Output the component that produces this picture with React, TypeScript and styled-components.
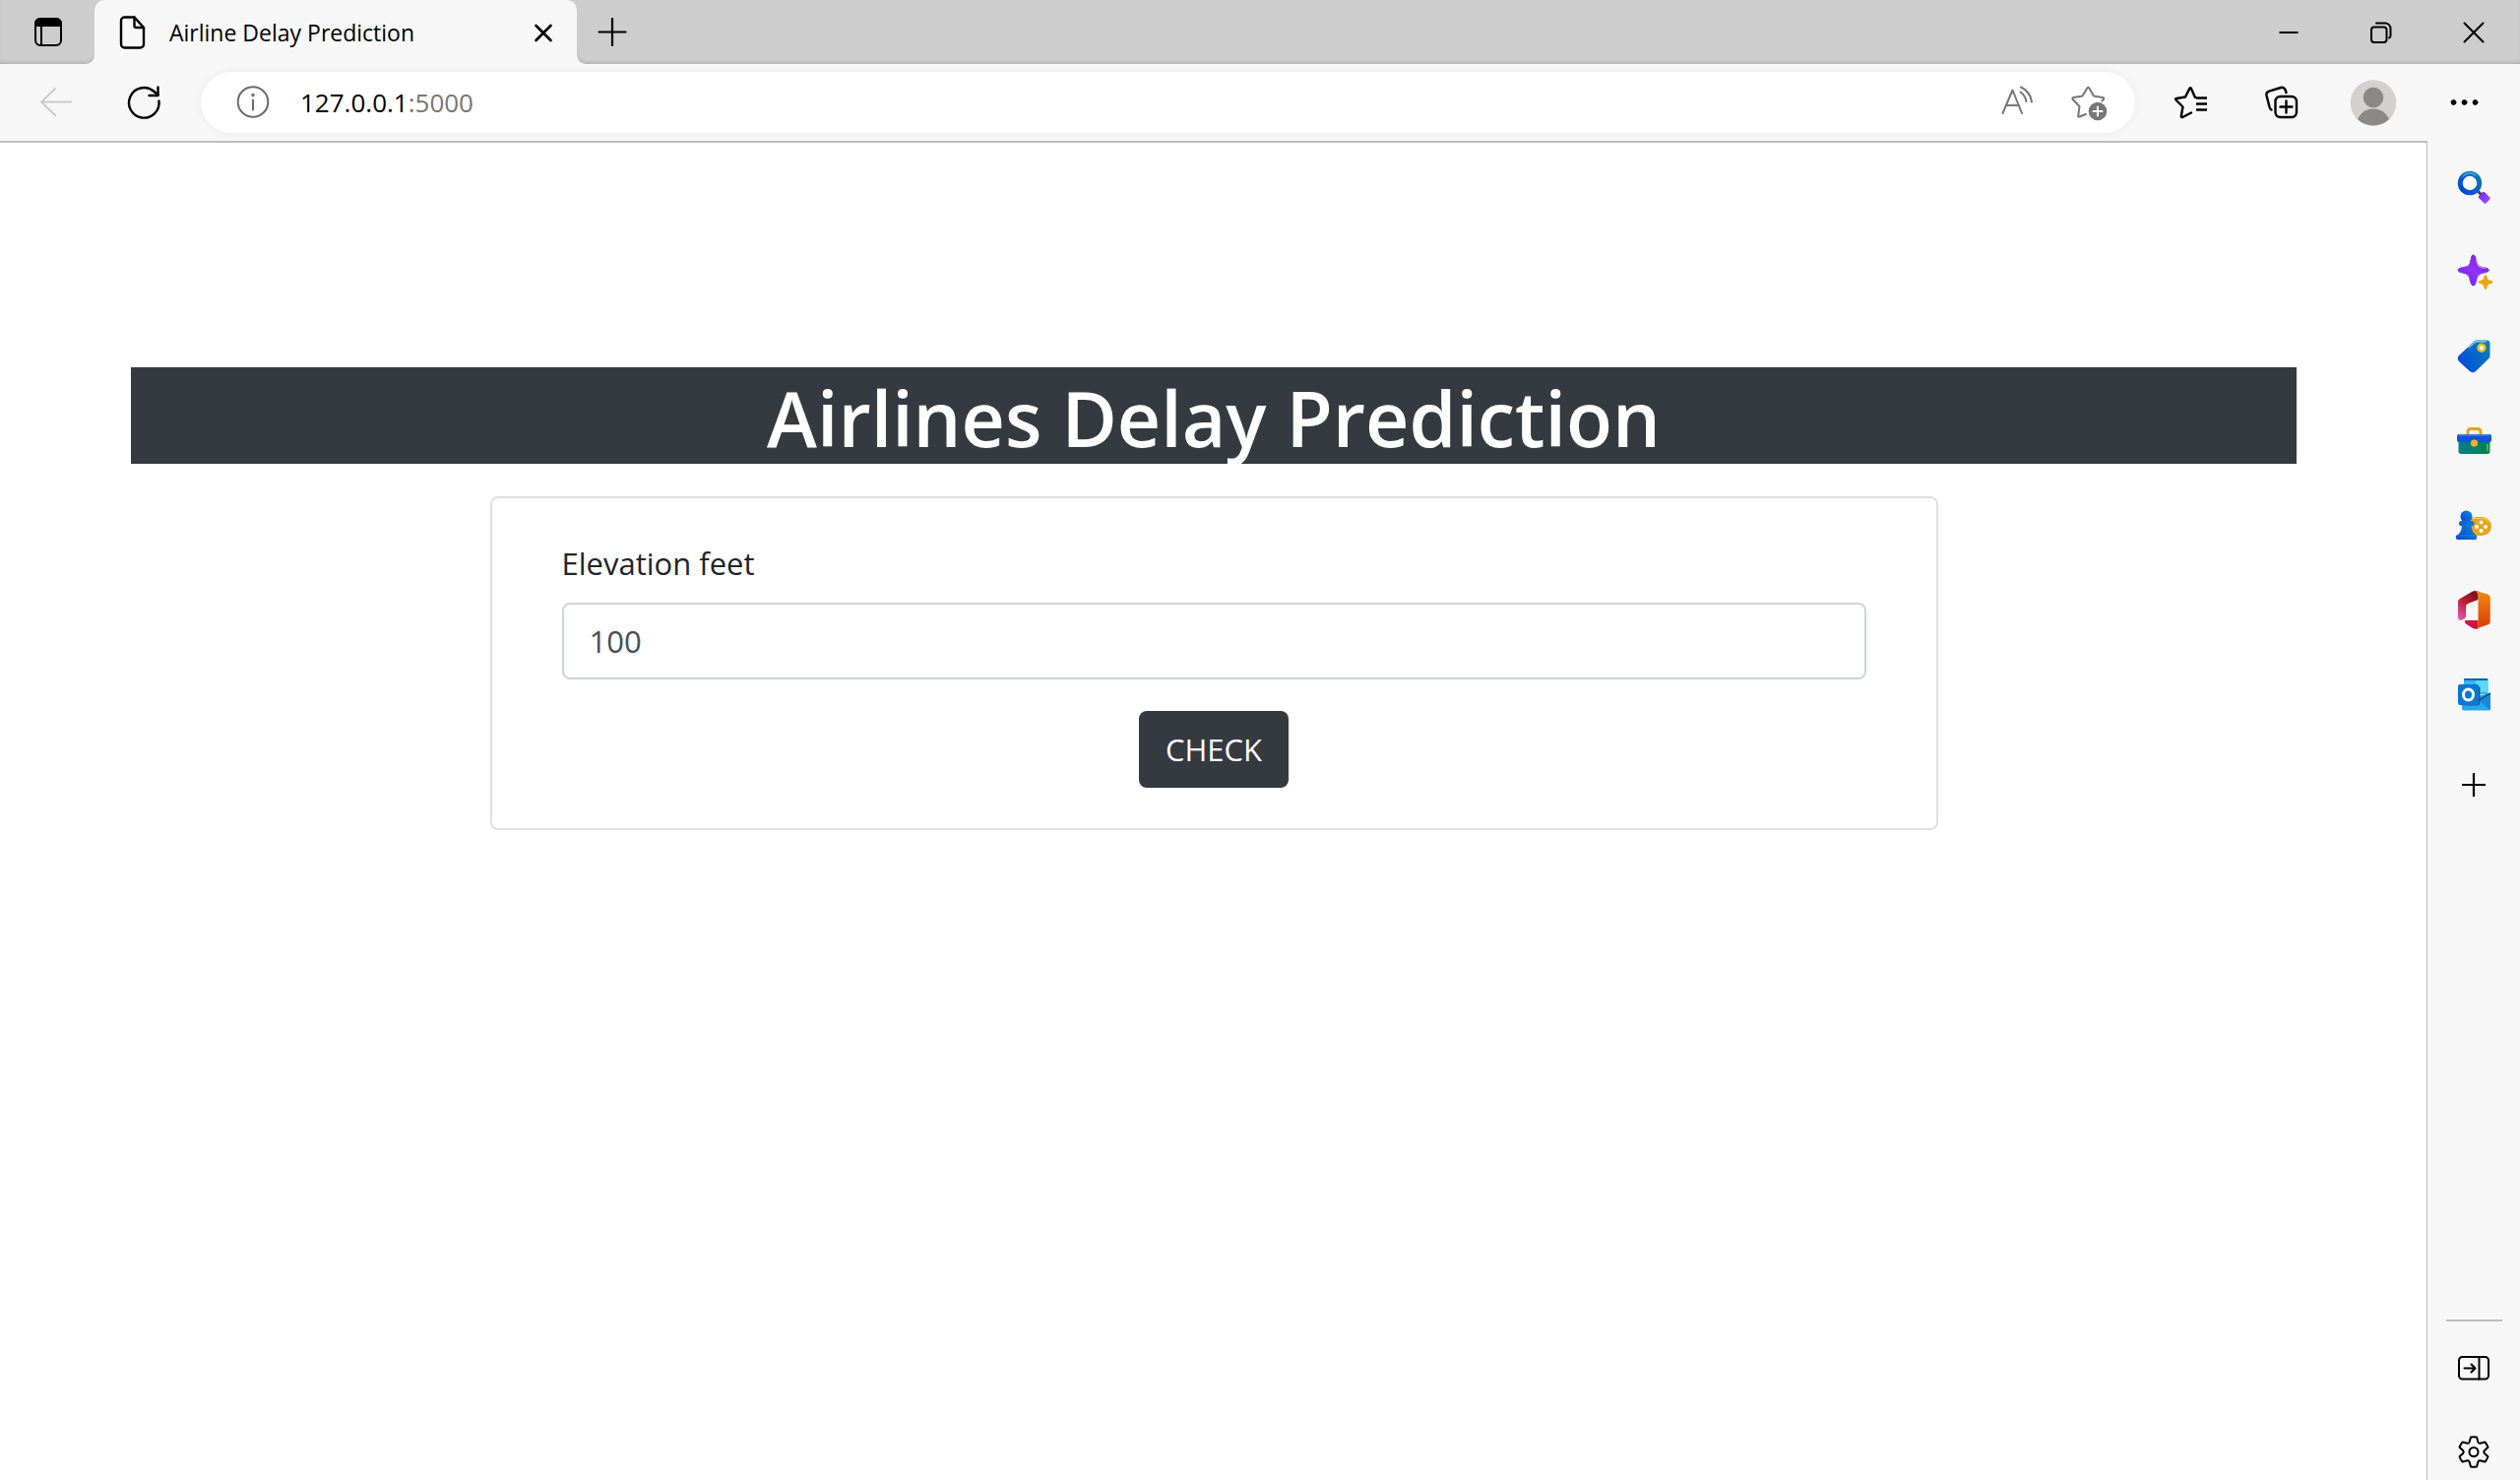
import React from 'react';
import styled, { createGlobalStyle } from 'styled-components';

const GlobalStyle = createGlobalStyle`
  * { box-sizing: border-box; }
  body { margin: 0; background: #fff; }
  body, button, input { font-family: "Open Sans", "Noto Sans", sans-serif; }
`;

const chrome = '#f7f7f7';
const strip = '#cdcdcd';
const line = '#bdbdbd';
const dark = '#343a40';

const Window = styled.div`
  display: flex;
  flex-direction: column;
  min-height: 100vh;
  background: #fff;
`;

const TitleBar = styled.header`
  display: flex;
  height: 65px;
  background: ${chrome};
`;

const StripPart = styled.div<{ $side: 'left' | 'right' }>`
  display: flex;
  align-items: center;
  gap: 50px;
  background: ${strip};
  box-shadow: inset 0 -4px 4px -3px rgba(0, 0, 0, 0.18);
  ${(p) =>
    p.$side === 'left'
      ? 'padding: 0 25px 0 27px; border-bottom-right-radius: 9px;'
      : 'flex: 1; padding: 0 25px 0 14px; border-bottom-left-radius: 9px;'}
`;

const TabSlot = styled.div`
  width: 490px;
  background: linear-gradient(${strip} 50%, ${chrome} 50%);
`;

const Tab = styled.div`
  display: flex;
  align-items: center;
  height: 100%;
  padding: 0 12px 0 16px;
  border-radius: 10px 10px 0 0;
  background: ${chrome};
`;

const TabTitle = styled.span`
  flex: 1;
  margin-left: 16px;
  font-size: 23px;
  line-height: 32px;
  color: #000;
  white-space: nowrap;
`;

const IconButton = styled.button<{ $tone?: string }>`
  display: flex;
  flex: none;
  width: 44px;
  height: 44px;
  padding: 0;
  border: 0;
  background: none;
  color: ${(p) => p.$tone ?? '#000'};
`;

const Glyph = styled.svg`
  display: block;
  flex: none;
  width: 44px;
  height: 44px;
  overflow: visible;
`;

const Spacer = styled.div`
  flex: 1;
`;

const Toolbar = styled.div`
  display: flex;
  align-items: center;
  height: 78px;
  padding: 0 35px;
  background: ${chrome};
`;

const NavButtons = styled.div`
  display: flex;
  gap: 45px;
  margin-right: 36px;
`;

const AddressBar = styled.div`
  display: flex;
  flex: 1;
  align-items: center;
  height: 62px;
  padding: 0 24px 0 31px;
  border-radius: 31px;
  background: #fff;
  box-shadow: 0 0 10px rgba(0, 0, 0, 0.06);
`;

const Url = styled.span`
  flex: 1;
  margin-left: 26px;
  font-size: 26px;
  line-height: 36px;
  color: #000;
`;

const Port = styled.span`
  color: #767676;
`;

const AddressActions = styled.div`
  display: flex;
  gap: 30px;
`;

const ToolbarActions = styled.div`
  display: flex;
  align-items: center;
  gap: 48px;
  margin-left: 36px;
`;

const Body = styled.div`
  display: flex;
  flex: 1;
`;

const Page = styled.main`
  display: flex;
  flex: 1;
  flex-direction: column;
  align-items: center;
  padding: 228px 132px 0 133px;
  border-top: 2px solid ${line};
  border-right: 1px solid ${line};
`;

const Banner = styled.h1`
  width: 100%;
  margin: 0 0 33px;
  padding-top: 6px;
  background: ${dark};
  color: #fff;
  font-size: 77px;
  font-weight: 600;
  line-height: 92px;
  text-align: center;
`;

const Card = styled.form`
  display: flex;
  flex-direction: column;
  width: 100%;
  max-width: 1471px;
  padding: 42px 71px 41px;
  border: 2px solid #dfdfdf;
  border-radius: 8px;
`;

const FieldLabel = styled.label`
  margin-bottom: 16px;
  font-size: 31px;
  line-height: 48px;
  color: #212529;
`;

const Field = styled.input`
  width: 100%;
  height: 78px;
  padding: 0 26px;
  border: 2px solid #ced4da;
  border-radius: 8px;
  background: #fff;
  font-size: 31px;
  color: #495057;
`;

const Submit = styled.button`
  align-self: center;
  height: 78px;
  margin-top: 32px;
  padding: 0 27px;
  border: 0;
  border-radius: 8px;
  background: ${dark};
  color: #fff;
  font-size: 31px;
`;

const Sidebar = styled.aside`
  display: flex;
  flex-direction: column;
  align-items: center;
  width: 94px;
  padding: 24px 0 6px;
  background: ${chrome};
`;

const SideGroup = styled.nav`
  display: flex;
  flex-direction: column;
  gap: 42px;
  margin-bottom: 48px;
`;

const Divider = styled.hr`
  width: 57px;
  height: 2px;
  margin: 0 0 25px;
  border: 0;
  background: ${line};
`;

const SideFooter = styled.div`
  display: flex;
  flex-direction: column;
  gap: 42px;
`;

type IconProps = { children: React.ReactNode; weight?: number };

const Icon = ({ children, weight = 2 }: IconProps) => (
  <Glyph
    viewBox="0 0 44 44"
    fill="none"
    stroke="currentColor"
    strokeWidth={weight}
    strokeLinecap="round"
    strokeLinejoin="round"
    aria-hidden="true"
  >
    {children}
  </Glyph>
);

const TabActionsIcon = () => (
  <Icon>
    <rect x="9" y="8" width="26" height="27" rx="5" />
    <path d="M9 15v-2a5 5 0 0 1 5-5h16a5 5 0 0 1 5 5v2z" fill="currentColor" />
    <path d="M15 15v20" />
  </Icon>
);
const DocumentIcon = () => (
  <Icon weight={2.4}>
    <path d="M14 6.500h10.500L34 17v17a3.500 3.500 0 0 1-3.500 3.500h-16A3.500 3.500 0 0 1 11 34V10a3.500 3.500 0 0 1 3.500-3.500" />
    <path d="M24.500 6.500V15a2 2 0 0 0 2 2H34" />
  </Icon>
);
const CloseIcon = () => (
  <Icon weight={2.6}><path d="M14.500 15l15 15M29.500 15l-15 15" /></Icon>
);
const NewTabIcon = () => <Icon weight={2.2}><path d="M22 8v27M8.500 21.500h27" /></Icon>;
const MinimizeIcon = () => <Icon><path d="M12.500 22h19" strokeLinecap="butt" /></Icon>;
const RestoreIcon = () => (
  <Icon>
    <rect x="12" y="16.500" width="15.500" height="15.500" rx="3" />
    <path d="M17 12.500h9a5.500 5.500 0 0 1 5.500 5.500v7.500q0 1.500-1.500 2" />
  </Icon>
);
const WindowCloseIcon = () => <Icon><path d="M12.500 12.500l19 19M31.500 12.500l-19 19" /></Icon>;
const BackIcon = () => <Icon><path d="M37 21.500H7M21 8L7 21.500 21 35" /></Icon>;
const RefreshIcon = () => (
  <Icon weight={2.4}>
    <path d="M37.500 20.500A15.300 15.300 0 1 1 32 10.500l4.500 4" />
    <path d="M36.500 6.500v8.500h-9" />
  </Icon>
);
const InfoIcon = () => (
  <Icon>
    <circle cx="22" cy="21.500" r="15.300" />
    <path d="M22 19.500v10" />
    <circle cx="22" cy="14.500" r="0.800" />
  </Icon>
);
const ReadAloudIcon = () => (
  <Icon>
    <path d="M7.500 33L17.500 9.500 27 33M11 25h13" />
    <path d="M25.500 11.500q5 3.500 6 9.500M26 6.500q9.500 4.500 11 15" />
  </Icon>
);
const AddFavoriteIcon = () => (
  <Icon>
    <path d="M18 34l-6.500 2.500q-1.500.5-1.300-1l1.300-9.500-6.800-7q-1-1.500.8-2l9-1.500 4.800-8q1-1.600 2 0l4.700 8 9 1.500q2 .5.900 2l-1.500 1.500" />
    <circle cx="30" cy="31" r="9.300" fill="currentColor" stroke="none" />
    <path d="M30 26.500v9M25.500 31h9" stroke="#fff" />
  </Icon>
);
const FavoritesIcon = () => (
  <Icon weight={2.4}>
    <path d="M25 17l-4-9q-.8-1.500-1.700 0l-4.300 8.500-9 1.500q-1.600.4-.5 1.500l7 7-1.700 9.500q0 1.500 1.500 1l8.700-4.500" />
    <path d="M26 17.500h11M26 23.500h11M26 29.500h11" strokeLinecap="butt" />
  </Icon>
);
const CollectionsIcon = () => (
  <Icon weight={2.4}>
    <rect x="14.500" y="16" width="21.500" height="21" rx="5" />
    <path d="M25.500 20.500v12M19.500 26.500h12M10.500 29.500q-1.500-.5-2-3L5.500 15q-.7-3 2.500-4.300L20 7q3-.8 4.500 2l1 3" />
  </Icon>
);
const AvatarIcon = () => (
  <Glyph viewBox="0 0 44 44" aria-hidden="true">
    <defs><clipPath id="face"><circle cx="22" cy="22.500" r="23" /></clipPath></defs>
    <circle cx="22" cy="22.500" r="23.300" fill="#d2d1cd" />
    <circle cx="22" cy="17" r="10.300" fill="#8c8885" />
    <circle cx="22" cy="46" r="17.500" fill="#8c8885" clipPath="url(#face)" />
  </Glyph>
);
const MoreIcon = () => (
  <Icon weight={1}>
    {[11.500, 22.500, 33.500].map((x) => <circle key={x} cx={x} cy="22" r="2.400" fill="currentColor" />)}
  </Icon>
);

const SearchArt = () => (
  <Glyph viewBox="0 0 44 44">
    <defs>
      <linearGradient id="ring" x1="1" y1="0" x2="0" y2="1"><stop stopColor="#0c7fba" /><stop offset="1" stopColor="#0044d8" /></linearGradient>
      <linearGradient id="handle" x1="0" y1="0" x2="1" y2="1"><stop stopColor="#6d2be6" /><stop offset="1" stopColor="#a850ff" /></linearGradient>
    </defs>
    <path d="M26 27l4 4" stroke="#444" strokeWidth="3" />
    <circle cx="18" cy="19" r="9.700" fill="#fff" stroke="url(#ring)" strokeWidth="5" />
    <path d="M11 12q6-6 13-1" fill="none" stroke="#4fa5d4" strokeWidth="1.300" strokeLinecap="round" />
    <path d="M28 33l4-4 5.500 5.500-4 4z" fill="url(#handle)" stroke="url(#handle)" strokeWidth="2.500" strokeLinejoin="round" />
  </Glyph>
);
const SparkleArt = () => (
  <Glyph viewBox="0 0 44 44">
    <defs><linearGradient id="spark" x1="1" y1="0" x2="0" y2="1"><stop stopColor="#5c22c9" /><stop offset=".5" stopColor="#9333f5" /><stop offset="1" stopColor="#5a20ee" /></linearGradient></defs>
    <path d="M21.500 6q2 0 2.600 4 .9 6 3 7.200 1.500.8 6.900 1.800 3.300.7 3.300 2.300 0 1.700-3.300 2.300-5.500 1-7 2.500-1.700 1.600-2.700 7-.7 3.900-2.800 3.900t-2.800-3.900q-1-5.400-2.700-7-1.500-1.500-7-2.500Q6 23 6 21.300 6 19.700 9.300 19q5.400-1 6.900-1.800 2.100-1.200 3-7.200.5-4 2.300-4z" fill="url(#spark)" stroke="url(#spark)" strokeWidth="1" />
    <path d="M24.500 10q1 6 3 7.500 2 1 6 1.800" stroke="#c58bff" strokeWidth="1.500" fill="none" strokeLinecap="round" />
    <path d="M34 26q1.200 0 1.600 2.500.4 2.800 3.100 3.300 2.800.4 2.800 1.600 0 1.300-2.800 1.800-2.700.5-3.100 3.300Q35.200 41 34 41t-1.600-2.500q-.4-2.800-3.100-3.300-2.800-.5-2.800-1.800 0-1.200 2.800-1.600 2.700-.5 3.100-3.300.4-2.500 1.600-2.500z" fill="#e7a811" />
  </Glyph>
);
const TagArt = () => (
  <Glyph viewBox="0 0 44 44">
    <defs><linearGradient id="tag" x1="1" y1=".2" x2="0" y2=".8"><stop stopColor="#087fbd" /><stop offset="1" stopColor="#034ad7" /></linearGradient></defs>
    <path d="M25 6.500h10Q38.500 6.500 38.500 10v12.500q0 1.500-1.300 2.800L24 38q-3 2.500-6 0L7 28q-2.500-3 0-6L22 8q1.300-1.500 3-1.500z" fill="url(#tag)" />
    <path d="M17 13.500L22.500 9Q24 7.800 26 7.800h8" fill="none" stroke="#75bce0" strokeWidth="2" strokeLinecap="round" />
    <circle cx="30" cy="14.300" r="3.500" fill="#fff" stroke="#f0b71b" strokeWidth="2.400" />
  </Glyph>
);
const ToolboxArt = () => (
  <Glyph viewBox="0 0 44 44">
    <defs><linearGradient id="box"><stop stopColor="#087e91" /><stop offset="1" stopColor="#088346" /></linearGradient></defs>
    <path d="M16 17v-3q0-3.500 3-3.500h7q3 0 3 3.500v3" fill="none" stroke="#e7a11d" strokeWidth="3" />
    <path d="M6.500 20h32v13.500q0 2.500-3 2.500H9.500q-3 0-3-2.500z" fill="url(#box)" />
    <rect x="5" y="16" width="35" height="8" rx="2" fill="#1353d7" />
    <path d="M7 17h31" stroke="#4d92e8" strokeWidth="1.200" />
    <path d="M36 26v7" stroke="#58bd89" strokeWidth="1.500" />
    <rect x="19" y="21.500" width="7" height="7" rx="3" fill="#e9b02c" />
  </Glyph>
);
const GamesArt = () => (
  <Glyph viewBox="0 0 44 44">
    <defs><linearGradient id="pawn" x1="1" y1="0" x2="0" y2="1"><stop stopColor="#1585df" /><stop offset="1" stopColor="#0843ca" /></linearGradient></defs>
    <rect x="15" y="14" width="25" height="19" rx="9.500" fill="#e6a51e" />
    <path d="M21 15.500h9q5 0 7.500 4" fill="none" stroke="#f6cc65" strokeWidth="1.200" />
    {[[29.500, 19.500], [25, 24], [34, 24], [29.500, 28]].map(([x, y]) => <circle key={`${x}-${y}`} cx={x} cy={y} r="2" fill="#fff" />)}
    <g fill="url(#pawn)">
      <circle cx="14.500" cy="13.500" r="6" />
      <rect x="7" y="18" width="15.500" height="5" rx="2.500" />
      <path d="M10 21h9.500q0 9 5.500 12 .5 4-2 4H6q-3-.5-2-4 6-2 6-12z" />
      <rect x="4" y="32" width="21" height="5" rx="2.500" />
    </g>
  </Glyph>
);
const OfficeArt = () => (
  <Glyph viewBox="0 0 44 44">
    <defs>
      <linearGradient id="officeL" x1=".7" y1="0" x2="0" y2="1"><stop stopColor="#7e1020" /><stop offset=".45" stopColor="#c21f35" /><stop offset="1" stopColor="#df62c2" /></linearGradient>
      <linearGradient id="officeR" x1="0" y1="0" x2="0" y2="1"><stop stopColor="#f28a10" /><stop offset="1" stopColor="#dc3a08" /></linearGradient>
    </defs>
    <path d="M6 14q0-2 2-3l13-7.500q2-1 5.500 0V12l-10.500 4q-2 .8-2 3v10q0 1.500-1.500 2.200L9 33q-3 0-3-4z" fill="url(#officeL)" />
    <path d="M13 34.500q-.8-1.500 1-1.500h12.500v8.500q-3 .8-5.500-.5l-7-4.500q-1-.8-1-2z" fill="#cb1740" />
    <path d="M22.500 2.500l13.500 4q2.800 1 2.800 4v23q0 3-2.800 4l-13 4.200q3.500-.5 3.500-4V9q0-4-4-6.500z" fill="url(#officeR)" />
  </Glyph>
);
const OutlookArt = () => (
  <Glyph viewBox="0 0 44 44">
    <path d="M13 6h22q1.500 0 1.500 1.500V22H12V7q0-1 1-1z" fill="#37b5ef" />
    <path d="M13 6h22q1.500 0 1.500 2H12q0-2 1-2z" fill="#0862ae" />
    <path d="M24 8h12.500v12H24z" fill="#58d8fc" />
    <path d="M10 24h14l15-3v16q0 1.500-2 1.500H12q-2 0-2-2z" fill="#2aa7e9" />
    <path d="M39 21v15.500q0 1-.5 1.500L27 28z" fill="#168bdb" />
    <path d="M39 21L27 28" stroke="#124f85" strokeWidth="1.500" />
    <path d="M10 33.500h15q3.500 0 3.500-3.500V15l-2-1v18z" fill="#24566f" />
    <rect x="6" y="12" width="21" height="21" rx="2" fill="#0877d4" />
    <ellipse cx="16.500" cy="22.500" rx="5" ry="5.500" fill="none" stroke="#fff" strokeWidth="3" />
  </Glyph>
);
const AddIcon = () => <Icon weight={2.2}><path d="M22 10v24M10 22h24" strokeLinecap="butt" /></Icon>;
const HidePanelIcon = () => (
  <Icon>
    <rect x="7" y="11" width="30" height="22.500" rx="3.500" />
    <path d="M27.500 11v22.500" />
    <path d="M12.500 22.500H23M19.500 18.500l4 4-4 4" />
  </Icon>
);
const SettingsIcon = () => (
  <Icon>
    <path d="M19 6.500q3-.6 6 0l1.400 5q.5 1.400 2 1.200l5-1.200q2 2.200 3.100 5.200l-3.800 3.600q-1 1.200 0 2.400l3.800 3.600q-1 3-3.100 5.200l-5-1.200q-1.500-.2-2 1.200l-1.400 5q-3 .6-6 0l-1.400-5q-.5-1.400-2-1.200l-5 1.200q-2.100-2.200-3.100-5.200l3.800-3.600q1-1.200 0-2.400l-3.800-3.600q1.100-3 3.100-5.200l5 1.200q1.500.2 2-1.200z" />
    <circle cx="22" cy="21.500" r="4.500" />
  </Icon>
);

const sideApps = [
  { name: 'Search', Art: SearchArt },
  { name: 'Discover', Art: SparkleArt },
  { name: 'Shopping', Art: TagArt },
  { name: 'Tools', Art: ToolboxArt },
  { name: 'Games', Art: GamesArt },
  { name: 'Office', Art: OfficeArt },
  { name: 'Outlook', Art: OutlookArt },
];

export default function App() {
  return (
    <Window>
      <GlobalStyle />
      <TitleBar>
        <StripPart $side="left">
          <IconButton aria-label="Tab actions"><TabActionsIcon /></IconButton>
        </StripPart>
        <TabSlot>
          <Tab>
            <DocumentIcon />
            <TabTitle>Airline Delay Prediction</TabTitle>
            <IconButton aria-label="Close tab"><CloseIcon /></IconButton>
          </Tab>
        </TabSlot>
        <StripPart $side="right">
          <IconButton aria-label="New tab"><NewTabIcon /></IconButton>
          <Spacer />
          <IconButton aria-label="Minimize"><MinimizeIcon /></IconButton>
          <IconButton aria-label="Restore"><RestoreIcon /></IconButton>
          <IconButton aria-label="Close window"><WindowCloseIcon /></IconButton>
        </StripPart>
      </TitleBar>
      <Toolbar>
        <NavButtons>
          <IconButton aria-label="Back" $tone="#cccccc"><BackIcon /></IconButton>
          <IconButton aria-label="Refresh"><RefreshIcon /></IconButton>
        </NavButtons>
        <AddressBar>
          <IconButton aria-label="Site information" $tone="#6b6b6b"><InfoIcon /></IconButton>
          <Url>127.0.0.1<Port>:5000</Port></Url>
          <AddressActions>
            <IconButton aria-label="Read aloud" $tone="#767676"><ReadAloudIcon /></IconButton>
            <IconButton aria-label="Add to favorites" $tone="#767676"><AddFavoriteIcon /></IconButton>
          </AddressActions>
        </AddressBar>
        <ToolbarActions>
          <IconButton aria-label="Favorites"><FavoritesIcon /></IconButton>
          <IconButton aria-label="Collections"><CollectionsIcon /></IconButton>
          <IconButton aria-label="Profile"><AvatarIcon /></IconButton>
          <IconButton aria-label="Settings and more"><MoreIcon /></IconButton>
        </ToolbarActions>
      </Toolbar>
      <Body>
        <Page>
          <Banner>Airlines Delay Prediction</Banner>
          <Card onSubmit={(e) => e.preventDefault()}>
            <FieldLabel htmlFor="elevation">Elevation feet</FieldLabel>
            <Field id="elevation" type="text" defaultValue="100" />
            <Submit type="submit">CHECK</Submit>
          </Card>
        </Page>
        <Sidebar>
          <SideGroup aria-label="Sidebar apps">
            {sideApps.map(({ name, Art }) => (
              <IconButton key={name} aria-label={name}><Art /></IconButton>
            ))}
          </SideGroup>
          <IconButton aria-label="Add to sidebar"><AddIcon /></IconButton>
          <Spacer />
          <Divider />
          <SideFooter>
            <IconButton aria-label="Hide sidebar"><HidePanelIcon /></IconButton>
            <IconButton aria-label="Settings"><SettingsIcon /></IconButton>
          </SideFooter>
        </Sidebar>
      </Body>
    </Window>
  );
}
